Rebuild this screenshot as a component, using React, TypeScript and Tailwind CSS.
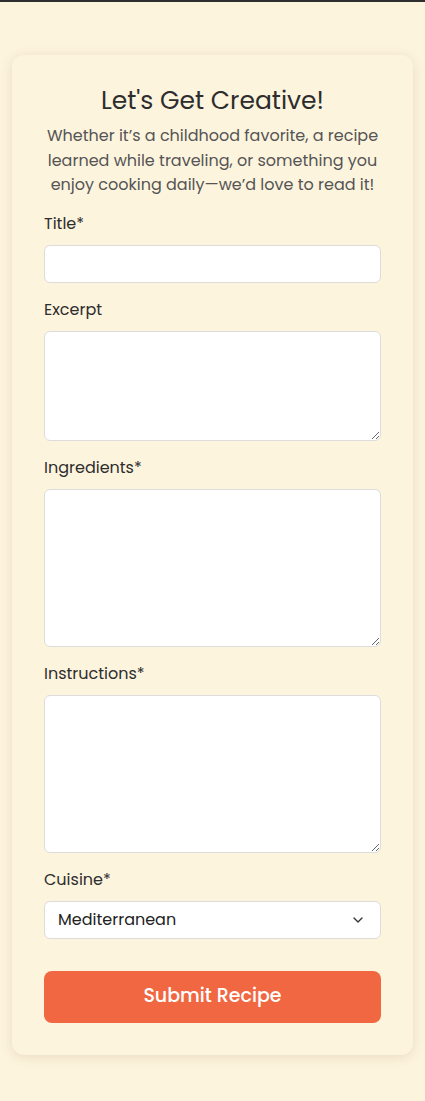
import { ChevronDown } from "lucide-react";

const font = { fontFamily: "Poppins, 'Open Sans', 'Noto Sans', sans-serif" };

const Field = ({ label, children }: { label: string; children: React.ReactNode }) => (
  <div className="flex flex-col">
    <label className="text-[16px] leading-[24px] text-[#2d2d2d] mb-[9px]">{label}</label>
    {children}
  </div>
);

export default function App() {
  return (
    <div className="min-h-[1101px] bg-[#fdf4de] border-t-2 border-[#2e2e2e] pt-[53px] px-3" style={font}>
      {/* form card */}
      <div className="bg-[#fdf4de] rounded-xl shadow-[0_2px_12px_rgba(120,90,30,0.15)] px-8 pt-[30px] pb-[32px]">
        <h1 className="text-center text-[25px] leading-[32px] text-[#2d2d2d]">Let's Get Creative!</h1>
        <p className="text-center text-[16px] leading-[24.5px] text-[#555] mt-[7px]">
          Whether it’s a childhood favorite, a recipe learned while traveling, or something you enjoy cooking daily—we’d love to read it!
        </p>

        <div className="flex flex-col gap-[15px] mt-[14px]">
          <Field label="Title*">
            <input className="h-[38px] bg-white border border-[#dcdcdc] rounded-md px-3 outline-none" />
          </Field>
          <Field label="Excerpt">
            <textarea className="h-[110px] bg-white border border-[#dcdcdc] rounded-md px-3 py-2 outline-none" />
          </Field>
          <Field label="Ingredients*">
            <textarea className="h-[158px] bg-white border border-[#dcdcdc] rounded-md px-3 py-2 outline-none" />
          </Field>
          <Field label="Instructions*">
            <textarea className="h-[158px] bg-white border border-[#dcdcdc] rounded-md px-3 py-2 outline-none" />
          </Field>
          <Field label="Cuisine*">
            <div className="h-[38px] bg-white border border-[#dcdcdc] rounded-md pl-[13px] pr-[14px] flex items-center justify-between">
              <span className="text-[16px] text-[#222]">Mediterranean</span>
              <ChevronDown className="w-4 h-4 text-[#333]" strokeWidth={2} />
            </div>
          </Field>
        </div>

        <button className="mt-[32px] w-full h-[52px] rounded-lg bg-[#f06742] text-white text-[19px] font-medium">
          Submit Recipe
        </button>
      </div>
    </div>
  );
}
